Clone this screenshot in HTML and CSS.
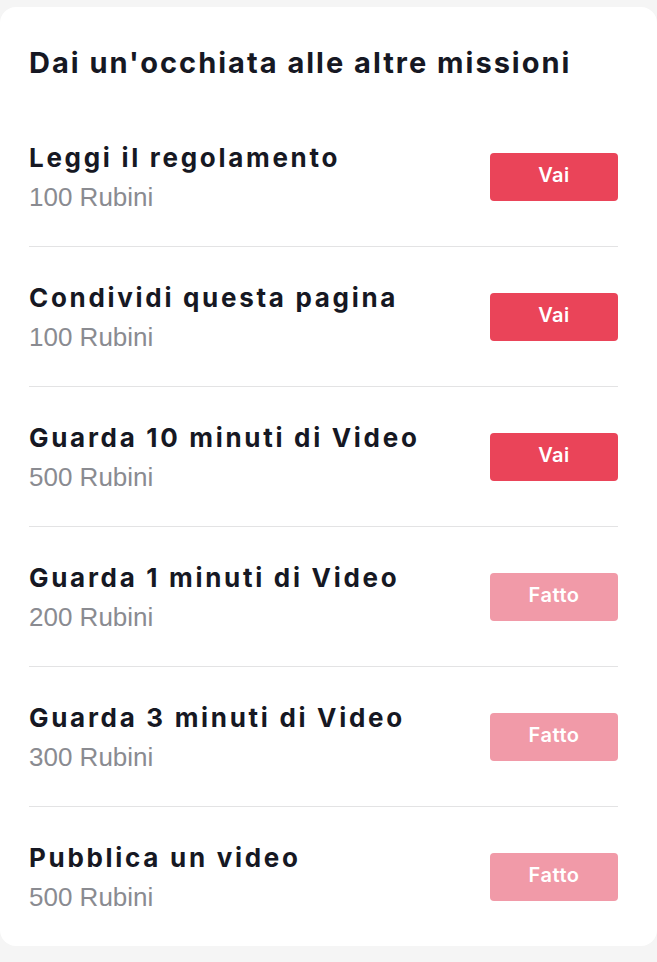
FILE: index.html
```html
<!DOCTYPE html>
<html lang="it">
<head>
<meta charset="utf-8">
<link rel="stylesheet" href="styles.css">
</head>
<body>
<section class="card">
  <h2 class="card-title">Dai un'occhiata alle altre missioni</h2>
  <ul class="missions">
    <li class="mission">
      <div class="info"><div class="name">Leggi il regolamento</div><div class="reward">100 Rubini</div></div>
      <button class="btn">Vai</button>
    </li>
    <li class="mission">
      <div class="info"><div class="name">Condividi questa pagina</div><div class="reward">100 Rubini</div></div>
      <button class="btn">Vai</button>
    </li>
    <li class="mission">
      <div class="info"><div class="name">Guarda 10 minuti di Video</div><div class="reward">500 Rubini</div></div>
      <button class="btn">Vai</button>
    </li>
    <li class="mission">
      <div class="info"><div class="name">Guarda 1 minuti di Video</div><div class="reward">200 Rubini</div></div>
      <button class="btn done">Fatto</button>
    </li>
    <li class="mission">
      <div class="info"><div class="name">Guarda 3 minuti di Video</div><div class="reward">300 Rubini</div></div>
      <button class="btn done">Fatto</button>
    </li>
    <li class="mission">
      <div class="info"><div class="name">Pubblica un video</div><div class="reward">500 Rubini</div></div>
      <button class="btn done">Fatto</button>
    </li>
  </ul>
</section>
</body>
</html>
```
FILE: styles.css
```css
* { box-sizing: border-box; }
html, body { margin: 0; padding: 0; }
body {
  background: #f5f5f5;
  padding: 7px 0 16px 0;
  font-family: Inter, "Open Sans", sans-serif;
}
.card {
  background: #fff;
  border-radius: 16px;
  padding: 0 39px 0 29px;
}
.card-title {
  margin: 0;
  height: 100px;
  padding-top: 39px;
  font-size: 29px;
  line-height: 34px;
  font-weight: 700;
  color: #161823;
  letter-spacing: 2px;
}
.missions { list-style: none; margin: 0; padding: 0; }
.mission {
  height: 140px;
  display: flex;
  align-items: center;
  justify-content: space-between;
  border-bottom: 1px solid #e3e3e4;
}
.mission:last-child { border-bottom: none; height: 139px; }
.info { display: flex; flex-direction: column; }
.name {
  font-size: 26px;
  line-height: 30px;
  font-weight: 700;
  color: #161823;
  letter-spacing: 2.7px;
}
.reward {
  margin-top: 10px;
  font-family: "Liberation Sans", Arial, sans-serif;
  font-size: 26px;
  line-height: 28px;
  color: #8a8b91;
}
.btn {
  width: 128px;
  height: 48px;
  border: none;
  border-radius: 4px;
  background: #ea4459;
  color: #fff;
  font-family: Inter, sans-serif;
  font-size: 20px;
  font-weight: 600;
  letter-spacing: 0.5px;
  padding: 0 0 4px 0;
}
.btn.done { background: #f19aa8; }
```
